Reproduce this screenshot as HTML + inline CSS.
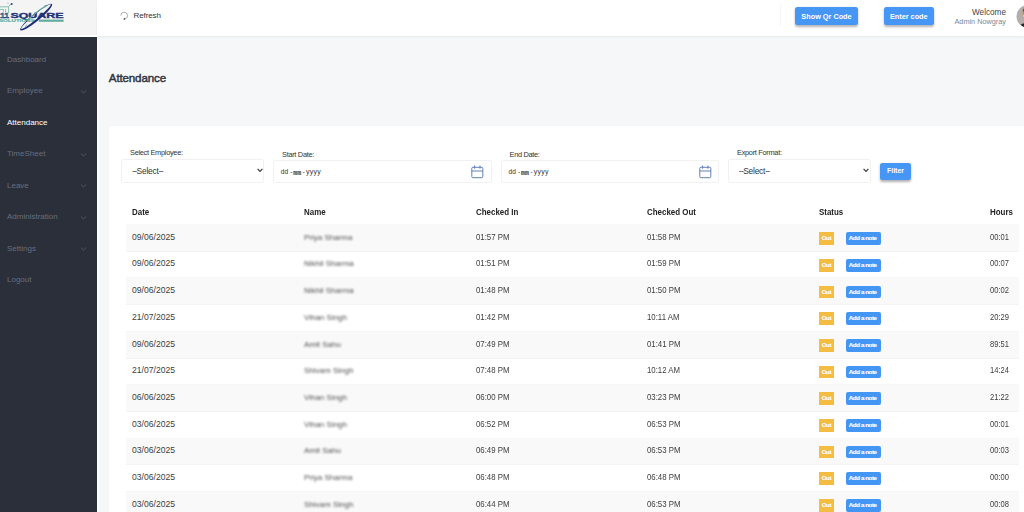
<!DOCTYPE html>
<html lang="en">
<head>
<meta charset="utf-8">
<title>Attendance</title>
<style>
*{box-sizing:border-box;margin:0;padding:0}
html,body{width:1024px;height:512px;overflow:hidden;background:#f6f7f9;font-family:"Liberation Sans",sans-serif;color:#333}
.abs{position:absolute}
#side{position:absolute;left:0;top:36.5px;width:97px;height:476px;background:#2b2f3a}
#logo{position:absolute;left:0;top:0;width:97px;height:35px;background:#f4f4f4;overflow:hidden}
#top{position:absolute;left:97px;top:0;width:927px;height:36px;background:#fff;box-shadow:0 1px 2.5px rgba(0,0,0,.06)}
.mi{position:absolute;left:7px;font-size:8px;line-height:10px;color:#676e7f;white-space:nowrap}
.mi.act{color:#fff}
.chev{position:absolute;left:79.5px;width:7px;height:4px}
#h1{position:absolute;left:108.8px;top:70px;font-size:11.6px;line-height:16px;color:#2d3440;white-space:nowrap;letter-spacing:-.15px;-webkit-text-stroke:.45px #2d3440}
#card{position:absolute;left:109px;top:126px;width:920px;height:400px;background:#fff;border-radius:2px;box-shadow:0 0 2px rgba(0,0,0,.035)}
.lbl{position:absolute;font-size:7.4px;line-height:9px;color:#333;white-space:nowrap;letter-spacing:-.3px}
.inp{position:absolute;border:1px solid #f1f1f1;border-radius:2.5px;background:#fff}
.sel{font-size:8.4px;line-height:23px;padding-left:10.2px;color:#333;letter-spacing:-.2px}
.sel u{text-decoration:none;letter-spacing:-.62px}
.dt{color:#333}
.dt span{position:absolute;top:0;line-height:21.6px;white-space:nowrap}
.dt .d{left:6.4px;font-size:6.6px}
.dt .h1{left:15.8px;top:-.5px;font-size:6.6px}
.dt .m{left:18.9px;top:1.8px;font-family:"Liberation Mono",monospace;font-size:6.5px;font-weight:bold}
.dt .h2{left:28.2px;top:-.5px;font-size:6.6px}
.dt .y{left:31.5px;font-size:7px;line-height:21.4px;letter-spacing:.28px}
.th{position:absolute;top:205.7px;font-size:8.5px;line-height:12px;font-weight:bold;color:#222;white-space:nowrap;transform:scaleX(.935);transform-origin:0 50%}
.tr{position:relative;left:126px;width:892.5px;height:26.7px;font-size:8.6px;color:#3d3d3d}
.tr:nth-child(odd)::before{content:"";position:absolute;left:0;top:0;width:100%;height:26.7px;background:#f9f9f9}
.tr::after{content:"";position:absolute;left:0;top:26.5px;width:100%;height:1px;background:#f3f3f3;z-index:1}
.tr:nth-child(even)::after{background:#f7f7f7}
.tr span{position:absolute;top:7.5px;line-height:11px;white-space:nowrap}
.c1{left:6px}.c2{left:178px}.c3{left:350px;transform:scaleX(.91);transform-origin:0 50%}.c4{left:521px;transform:scaleX(.91);transform-origin:0 50%}.c5{left:693px}.c6{left:863.8px;transform:scaleX(.88);transform-origin:0 50%}
.nm{color:#3a3a3a;filter:blur(1.2px);opacity:.9;font-size:8px}
.out{position:absolute;left:-.2px;top:.4px;width:15.2px;height:12.8px;background:#f4bc40;color:#fff;font-size:6.2px;line-height:11.8px;text-align:center;letter-spacing:-.4px;-webkit-text-stroke:.15px #fff}
.note{position:absolute;left:26.5px;top:.4px;width:35px;height:12.8px;background:#4496f5;color:#fff;font-size:6.2px;line-height:11.8px;text-align:center;text-indent:-.6px;border-radius:2px;letter-spacing:-.42px;-webkit-text-stroke:.15px #fff}
.btn{position:absolute;background:#4696f5;color:#fff;font-weight:bold;text-align:center;border-radius:2.5px;box-shadow:0 1.5px 2.5px rgba(0,0,0,.3);white-space:nowrap}
</style>
</head>
<body>
<div class="abs" style="left:0;top:34px;width:99px;height:3px;background:#fff"></div>
<div id="logo">
<svg width="97" height="37" viewBox="0 0 97 37" style="position:absolute;left:0;top:0">
  <g fill="none" stroke="#69b0a0" stroke-width=".8">
    <path d="M0 6.8h8.6v6.4M0 9.4h3.4v2.4M5.6 9v3.6"/>
    <path d="M8.8 6.5l2-2.6"/>
  </g>
  <circle cx="11.7" cy="3.9" r="1" fill="#2d3f86"/>
  <circle cx="8" cy="3" r=".6" fill="#7f90c4"/>
  <text x="0" y="18.2" font-family="Liberation Sans, sans-serif" font-weight="bold" font-size="6.4" fill="#58a796" stroke="#1d2f78" stroke-width=".35" textLength="9.2" lengthAdjust="spacingAndGlyphs">11</text>
  <text x="10.4" y="18.3" font-family="Liberation Sans, sans-serif" font-weight="bold" font-size="7.4" fill="#1f3176" stroke="#1f3176" stroke-width=".35" textLength="53.2" lengthAdjust="spacingAndGlyphs">SQUARE</text>
  <text x="-1" y="21.8" font-family="Liberation Sans, sans-serif" font-weight="bold" font-size="3.3" fill="#57ae9b" stroke="#57ae9b" stroke-width=".12" textLength="35.5" lengthAdjust="spacingAndGlyphs">SOLUTIONS</text>
  <rect x="39" y="19.6" width="24.6" height="2.2" fill="#62ad9c"/>
  <g transform="rotate(-39.6 36.2 17.1)">
    <path d="M15.7 17.1a20.5 3.9 0 1 0 41 0a20.5 3.9 0 1 0-41 0zM17.2 16.5a19.2 2.3 0 1 1 38.4 0a19.2 2.3 0 1 1-38.4 0z" fill="#1d2f78" fill-rule="evenodd"/>
    <path d="M26.88 14.04A19.85 3.35 0 0 1 50.95 14.76" fill="none" stroke="#62ad9c" stroke-width="1.15"/>
    <path d="M49.75 13.16l2.9 1.6l-3.2 1z" fill="#62ad9c"/>
    <path d="M21.5 18.2a14 2 0 0 1 3-1.4" fill="none" stroke="#62ad9c" stroke-width=".7"/>
  </g>
</svg>
</div>
<div id="top">
  <svg class="abs" style="left:22px;top:11px" width="10" height="10" viewBox="0 0 10 10"><path d="M1.8 4.6A3.4 3.4 0 1 1 5.7 8" fill="none" stroke="#777" stroke-width=".6"/><path d="M5.8 7.1L4.5 7.95L5.8 8.8z" fill="#444" stroke="#444" stroke-width=".4"/></svg>
  <div class="abs" style="left:36.6px;top:11.4px;font-size:8px;line-height:10px;color:#333;letter-spacing:-.12px">Refresh</div>
  <div class="abs" style="left:683px;top:5px;width:1px;height:21px;background:#f5f5f5"></div>
  <div class="btn" style="left:698px;top:7px;width:63px;height:18.4px;font-size:7.3px;line-height:19.8px">Show Qr Code</div>
  <div class="btn" style="left:787px;top:7px;width:49.5px;height:18.4px;font-size:7.3px;line-height:19.8px">Enter code</div>
  <div class="abs" style="right:18px;top:7.8px;font-size:8.2px;line-height:10px;color:#444;text-align:right">Welcome</div>
  <div class="abs" style="right:18px;top:16.6px;font-size:7.3px;line-height:9px;color:#7d8896;text-align:right;white-space:nowrap">Admin Nowgray</div>
  <svg class="abs" style="left:919px;top:5px" width="8" height="23" viewBox="0 0 8 23"><defs><clipPath id="av"><circle cx="11.6" cy="11.4" r="11.1"/></clipPath></defs><g clip-path="url(#av)"><rect width="8" height="23" fill="#b4adad"/><ellipse cx="9.9" cy="9.2" rx="3.4" ry="5.2" fill="#c98a55"/><ellipse cx="10" cy="5.2" rx="3.3" ry="2.2" fill="#8a5630"/><ellipse cx="7.6" cy="11" rx=".9" ry="1.6" fill="#e8c27a"/><ellipse cx="10" cy="23" rx="7" ry="5" fill="#2b2625"/></g></svg>
</div>
<div id="side">
  <div class="mi" style="top:18px">Dashboard</div>
  <div class="mi" style="top:49.5px">Employee</div>
  <div class="mi act" style="top:81px">Attendance</div>
  <div class="mi" style="top:112.5px">TimeSheet</div>
  <div class="mi" style="top:144px">Leave</div>
  <div class="mi" style="top:175.5px">Administration</div>
  <div class="mi" style="top:207px">Settings</div>
  <div class="mi" style="top:238.5px">Logout</div>
  <svg class="chev" style="top:53.1px" viewBox="0 0 7 4"><path d="M.9.6L3.5 3L6.1.6" fill="none" stroke="#626979" stroke-width=".7"/></svg>
  <svg class="chev" style="top:116.1px" viewBox="0 0 7 4"><path d="M.9.6L3.5 3L6.1.6" fill="none" stroke="#626979" stroke-width=".7"/></svg>
  <svg class="chev" style="top:147.6px" viewBox="0 0 7 4"><path d="M.9.6L3.5 3L6.1.6" fill="none" stroke="#626979" stroke-width=".7"/></svg>
  <svg class="chev" style="top:179.1px" viewBox="0 0 7 4"><path d="M.9.6L3.5 3L6.1.6" fill="none" stroke="#626979" stroke-width=".7"/></svg>
  <svg class="chev" style="top:210.6px" viewBox="0 0 7 4"><path d="M.9.6L3.5 3L6.1.6" fill="none" stroke="#626979" stroke-width=".7"/></svg>
</div>
<div class="abs" style="left:97px;top:37px;width:1px;height:475px;background:#fff"></div><div class="abs" style="left:98px;top:37px;width:1px;height:475px;background:#fafbfc"></div>
<div id="h1">Attendance</div>
<div id="card"></div>
<div class="lbl" style="left:130px;top:148.4px">Select Employee:</div>
<div class="lbl" style="left:282px;top:149.6px">Start Date:</div>
<div class="lbl" style="left:509.6px;top:149.6px;letter-spacing:-.32px">End Date:</div>
<div class="lbl" style="left:737px;top:148.4px">Export Format:</div>
<div class="inp sel" style="left:121px;top:159px;width:143.4px;height:24px"><u>--</u>Select<u>--</u></div>
<div class="inp dt" style="left:273.4px;top:160px;width:218.5px;height:23px"><span class="d">dd</span><span class="h1">-</span><span class="m">mm</span><span class="h2">-</span><span class="y">yyyy</span></div>
<div class="inp dt" style="left:501.2px;top:160px;width:218.2px;height:23px"><span class="d">dd</span><span class="h1">-</span><span class="m">mm</span><span class="h2">-</span><span class="y">yyyy</span></div>
<div class="inp sel" style="left:728.4px;top:159px;width:142.5px;height:24px;padding-left:9.4px"><u>--</u>Select<u>--</u></div>
<svg class="abs" style="left:256.5px;top:168.3px" width="6" height="5" viewBox="0 0 6 5"><path d="M.6.8L3 3.4L5.4.8" fill="none" stroke="#333" stroke-width="1.1"/></svg>
<svg class="abs" style="left:863.2px;top:168.3px" width="6" height="5" viewBox="0 0 6 5"><path d="M.6.8L3 3.4L5.4.8" fill="none" stroke="#333" stroke-width="1.1"/></svg>
<svg class="abs" style="left:471px;top:164.6px" width="13" height="14" viewBox="0 0 13 14"><g fill="none" stroke="#5b7ab2" stroke-width=".95"><rect x=".8" y="2.3" width="11" height="10.4" rx="1"/><path d="M.8 6h11M3.6.5v3.2M9 .5v3.2"/></g></svg>
<svg class="abs" style="left:698.6px;top:164.6px" width="13" height="14" viewBox="0 0 13 14"><g fill="none" stroke="#5b7ab2" stroke-width=".95"><rect x=".8" y="2.3" width="11" height="10.4" rx="1"/><path d="M.8 6h11M3.6.5v3.2M9 .5v3.2"/></g></svg>
<div class="btn" style="left:880px;top:162.5px;width:31px;height:17.5px;font-size:6.9px;line-height:16.9px">Filter</div>
<div class="th" style="left:132px">Date</div>
<div class="th" style="left:304px">Name</div>
<div class="th" style="left:476px">Checked In</div>
<div class="th" style="left:647px">Checked Out</div>
<div class="th" style="left:819px">Status</div>
<div class="th" style="left:990px">Hours</div>
<div id="rows" style="position:absolute;left:0;top:224.25px;width:1024px;height:300px">
<div class="tr"><span class="c1">09/06/2025</span><span class="c2 nm">Priya Sharma</span><span class="c3">01:57 PM</span><span class="c4">01:58 PM</span><span class="c5"><b class="out">Out</b><b class="note">Add a note</b></span><span class="c6">00:01</span></div>
<div class="tr"><span class="c1">09/06/2025</span><span class="c2 nm">Nikhil Sharma</span><span class="c3">01:51 PM</span><span class="c4">01:59 PM</span><span class="c5"><b class="out">Out</b><b class="note">Add a note</b></span><span class="c6">00:07</span></div>
<div class="tr"><span class="c1">09/06/2025</span><span class="c2 nm">Nikhil Sharma</span><span class="c3">01:48 PM</span><span class="c4">01:50 PM</span><span class="c5"><b class="out">Out</b><b class="note">Add a note</b></span><span class="c6">00:02</span></div>
<div class="tr"><span class="c1">21/07/2025</span><span class="c2 nm">Vihan Singh</span><span class="c3">01:42 PM</span><span class="c4">10:11 AM</span><span class="c5"><b class="out">Out</b><b class="note">Add a note</b></span><span class="c6">20:29</span></div>
<div class="tr"><span class="c1">09/06/2025</span><span class="c2 nm">Amit Sahu</span><span class="c3">07:49 PM</span><span class="c4">01:41 PM</span><span class="c5"><b class="out">Out</b><b class="note">Add a note</b></span><span class="c6">89:51</span></div>
<div class="tr"><span class="c1">21/07/2025</span><span class="c2 nm">Shivam Singh</span><span class="c3">07:48 PM</span><span class="c4">10:12 AM</span><span class="c5"><b class="out">Out</b><b class="note">Add a note</b></span><span class="c6">14:24</span></div>
<div class="tr"><span class="c1">06/06/2025</span><span class="c2 nm">Vihan Singh</span><span class="c3">06:00 PM</span><span class="c4">03:23 PM</span><span class="c5"><b class="out">Out</b><b class="note">Add a note</b></span><span class="c6">21:22</span></div>
<div class="tr"><span class="c1">03/06/2025</span><span class="c2 nm">Vihan Singh</span><span class="c3">06:52 PM</span><span class="c4">06:53 PM</span><span class="c5"><b class="out">Out</b><b class="note">Add a note</b></span><span class="c6">00:01</span></div>
<div class="tr"><span class="c1">03/06/2025</span><span class="c2 nm">Amit Sahu</span><span class="c3">06:49 PM</span><span class="c4">06:53 PM</span><span class="c5"><b class="out">Out</b><b class="note">Add a note</b></span><span class="c6">00:03</span></div>
<div class="tr"><span class="c1">03/06/2025</span><span class="c2 nm">Priya Sharma</span><span class="c3">06:48 PM</span><span class="c4">06:48 PM</span><span class="c5"><b class="out">Out</b><b class="note">Add a note</b></span><span class="c6">00:00</span></div>
<div class="tr"><span class="c1">03/06/2025</span><span class="c2 nm">Shivam Singh</span><span class="c3">06:44 PM</span><span class="c4">06:53 PM</span><span class="c5"><b class="out">Out</b><b class="note">Add a note</b></span><span class="c6">00:08</span></div>

</div>
</body>
</html>
